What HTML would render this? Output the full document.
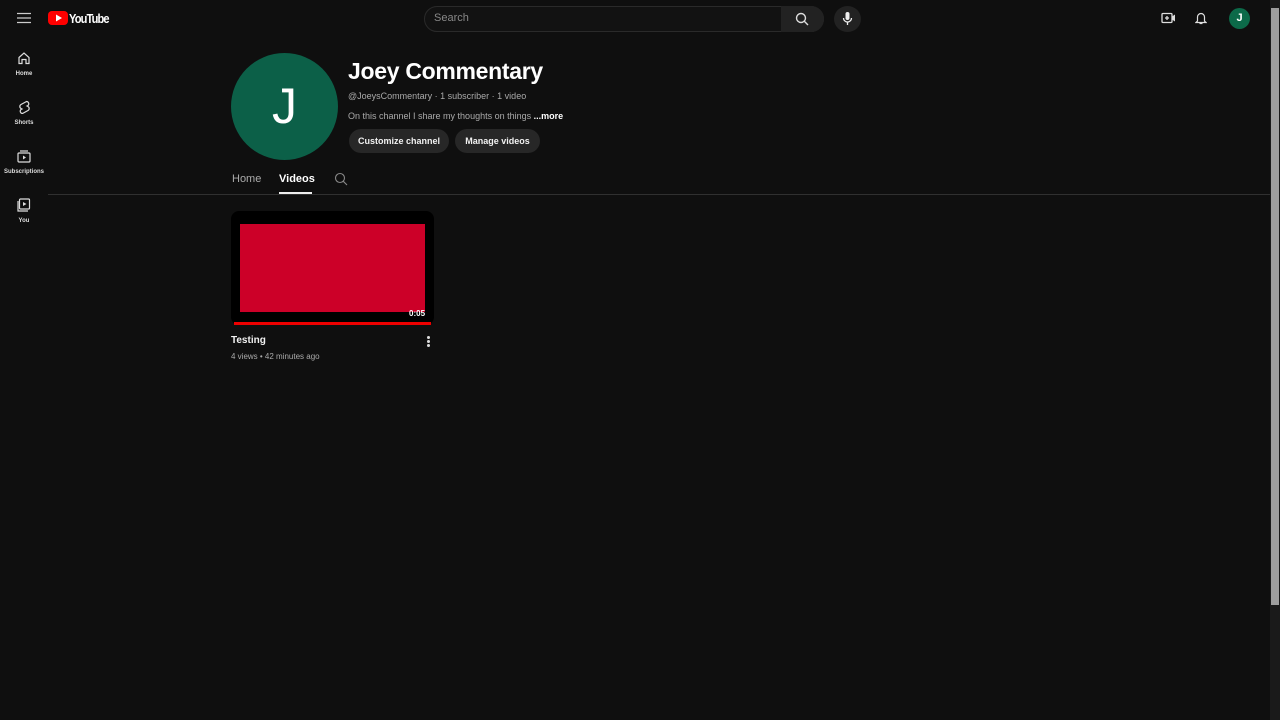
<!DOCTYPE html>
<html><head><meta charset="utf-8"><style>
*{margin:0;padding:0;box-sizing:border-box}
body{width:1280px;height:720px;background:#0f0f0f;font-family:"Liberation Sans",sans-serif;color:#f1f1f1;position:relative;overflow:hidden}
.a{position:absolute}
.side{position:absolute;left:0;width:48px;text-align:center;font-size:6px;font-weight:bold;color:#ddd}
.side svg{display:block;margin:0 auto 6px}
.btn{position:absolute;top:129px;height:24px;border-radius:12px;background:#272727;font-size:9px;font-weight:bold;line-height:24px;text-align:center;color:#f1f1f1}
</style></head><body>
<svg class="a" style="left:17px;top:12px" width="14" height="12" viewBox="0 0 14 12"><path d="M0 1.5h14M0 6h14M0 10.5h14" stroke="#ccc" stroke-width="1.3"/></svg>
<div class="a" style="left:48px;top:11px;width:20px;height:14px;background:#f00;border-radius:4px"></div>
<svg class="a" style="left:55px;top:14px" width="8" height="8" viewBox="0 0 8 8"><path d="M1 0.5L7 4L1 7.5Z" fill="#fff"/></svg>
<div class="a" style="left:69px;top:11px;font-size:13px;font-weight:bold;letter-spacing:-1px;transform:scaleX(.85);transform-origin:left;color:#fff">YouTube</div>
<div class="a" style="left:424px;top:6px;width:400px;height:26px;border:1px solid #2a2a2a;border-radius:13px;background:#121212"></div>
<div class="a" style="left:781px;top:6px;width:43px;height:26px;background:#222;border-radius:0 13px 13px 0"></div>
<div class="a" style="left:434px;top:12px;font-size:11px;color:#888">Search</div>
<svg class="a" style="left:795px;top:12px" width="14" height="14" viewBox="0 0 14 14"><circle cx="6" cy="6" r="4.5" fill="none" stroke="#ddd" stroke-width="1.4"/><path d="M9.3 9.3L13 13" stroke="#ddd" stroke-width="1.4"/></svg>
<div class="a" style="left:834px;top:6px;width:27px;height:26px;border-radius:50%;background:#222"></div>
<svg class="a" style="left:842px;top:12px" width="11" height="14" viewBox="0 0 11 14"><rect x="3.5" y="0" width="4" height="8" rx="2" fill="#eee"/><path d="M1.5 6a4 4 0 0 0 8 0M5.5 10v3" stroke="#eee" stroke-width="1.3" fill="none"/></svg>
<svg class="a" style="left:1161px;top:12px" width="15" height="12" viewBox="0 0 15 12"><rect x="1" y="1.5" width="10" height="9" rx="1" fill="none" stroke="#ddd" stroke-width="1.3"/><path d="M11 4.5l3-2v7l-3-2z" fill="#ddd"/><path d="M6 4v4M4 6h4" stroke="#ddd" stroke-width="1.3"/></svg>
<svg class="a" style="left:1195px;top:11px" width="12" height="14" viewBox="0 0 12 14"><path d="M2.5 10V6a3.5 3.5 0 0 1 7 0v4l1.5 1.5H1z" fill="none" stroke="#ddd" stroke-width="1.2"/><path d="M4.5 12.5h3" stroke="#ddd" stroke-width="1.2"/></svg>
<div class="a" style="left:1229px;top:8px;width:21px;height:21px;border-radius:50%;background:#0c6a49;font-size:11px;font-weight:bold;line-height:21px;text-align:center;color:#fff">J</div>
<div class="a" style="left:1270px;top:0;width:10px;height:720px;background:#1a1a1a"></div>
<div class="a" style="left:1271px;top:8px;width:8px;height:597px;background:#9e9e9e"></div>
<div class="side" style="top:51px"><svg width="14" height="14" viewBox="0 0 14 14"><path d="M2 6.5L7 2l5 4.5V12.5H9v-4H5v4H2z" fill="none" stroke="#ddd" stroke-width="1.2"/></svg>Home</div>
<div class="side" style="top:100px"><svg width="14" height="14" viewBox="0 0 14 14"><path d="M9.5 1.5L4 4.5a2.3 2.3 0 0 0 0 4l1 .5-1 .5a2.3 2.3 0 0 0 1.5 4l5.5-3a2.3 2.3 0 0 0 0-4L10 6l1-.5a2.3 2.3 0 0 0-1.5-4z" fill="none" stroke="#ddd" stroke-width="1.2"/></svg>Shorts</div>
<div class="side" style="top:149px"><svg width="14" height="14" viewBox="0 0 14 14"><rect x="1" y="4" width="12" height="9" rx="1" fill="none" stroke="#ddd" stroke-width="1.2"/><path d="M3 2h8" stroke="#ddd" stroke-width="1.2"/><path d="M6 6.5l3 2-3 2z" fill="#ddd"/></svg>Subscriptions</div>
<div class="side" style="top:198px"><svg width="14" height="14" viewBox="0 0 14 14"><rect x="2.5" y="1" width="10" height="10" rx="1" fill="none" stroke="#ddd" stroke-width="1.2"/><path d="M1 3v10h10" fill="none" stroke="#ddd" stroke-width="1.2"/><path d="M6 4l3.5 2L6 8z" fill="#ddd"/></svg>You</div>
<div class="a" style="left:231px;top:53px;width:107px;height:107px;border-radius:50%;background:#0c6048;color:#fff;font-size:50px;line-height:107px;text-align:center">J</div>
<div class="a" style="left:348px;top:58px;font-size:23px;font-weight:bold;color:#fff;letter-spacing:-.3px">Joey Commentary</div>
<div class="a" style="left:348px;top:91px;font-size:9px;color:#aaa">@JoeysCommentary · 1 subscriber · 1 video</div>
<div class="a" style="left:348px;top:111px;font-size:9px;color:#aaa">On this channel I share my thoughts on things <b style="color:#fff">...more</b></div>
<div class="btn" style="left:349px;width:100px">Customize channel</div>
<div class="btn" style="left:455px;width:85px">Manage videos</div>
<div class="a" style="left:232px;top:173px;font-size:11px;color:#aaa">Home</div>
<div class="a" style="left:279px;top:173px;font-size:11px;font-weight:bold;color:#fff">Videos</div>
<div class="a" style="left:279px;top:192px;width:33px;height:2px;background:#eee"></div>
<svg class="a" style="left:334px;top:172px" width="14" height="14" viewBox="0 0 14 14"><circle cx="6" cy="6" r="4.5" fill="none" stroke="#888" stroke-width="1.1"/><path d="M9.3 9.3L13 13" stroke="#888" stroke-width="1.1"/></svg>
<div class="a" style="left:48px;top:194px;width:1222px;height:1px;background:#303030"></div>
<div class="a" style="left:231px;top:211px;width:203px;height:114px;background:#000;border-radius:8px"></div>
<div class="a" style="left:240px;top:224px;width:185px;height:88px;background:#cc0028"></div>
<div class="a" style="left:409px;top:309px;font-size:8px;font-weight:bold;color:#fff">0:05</div>
<div class="a" style="left:234px;top:322px;width:197px;height:3px;background:#e00"></div>
<div class="a" style="left:231px;top:335px;font-size:10px;font-weight:bold;color:#f1f1f1">Testing</div>
<div class="a" style="left:231px;top:352px;font-size:8px;color:#aaa">4 views • 42 minutes ago</div>
<div class="a" style="left:427px;top:336px;width:3px;height:3px;border-radius:50%;background:#ddd;box-shadow:0 4px 0 #ddd,0 8px 0 #ddd"></div>
</body></html>
